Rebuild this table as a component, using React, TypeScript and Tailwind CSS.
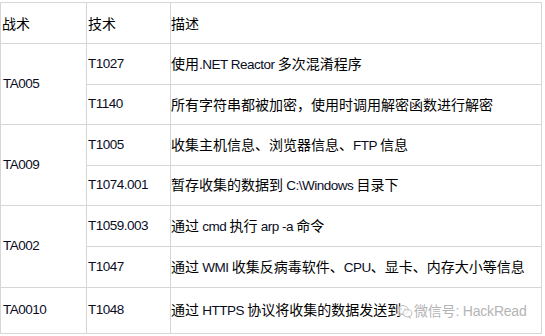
import { Fragment } from 'react';

// split mixed text so latin runs get the narrower, smaller face
function Mixed({ text }: { text: string }) {
  const parts = text.split(/([\x00-\x7F]+)/).filter(Boolean);
  return (
    <>
      {parts.map((p, i) =>
        /^[\x00-\x7F]+$/.test(p) ? (
          <span key={i} className="font-['Liberation_Sans',sans-serif] text-[13.5px] tracking-[-0.5px] text-[#0a0d1f] whitespace-pre">
            {p}
          </span>
        ) : (
          <Fragment key={i}>{p}</Fragment>
        )
      )}
    </>
  );
}

interface Row {
  tech: string;
  desc: string;
  tactic?: string;
  span?: number;
}

const rows: Row[] = [
  { tactic: 'TA005', span: 2, tech: 'T1027', desc: '使用.NET Reactor 多次混淆程序' },
  { tech: 'T1140', desc: '所有字符串都被加密，使用时调用解密函数进行解密' },
  { tactic: 'TA009', span: 2, tech: 'T1005', desc: '收集主机信息、浏览器信息、FTP 信息' },
  { tech: 'T1074.001', desc: '暂存收集的数据到 C:\\Windows 目录下' },
  { tactic: 'TA002', span: 2, tech: 'T1059.003', desc: '通过 cmd 执行 arp -a 命令' },
  { tech: 'T1047', desc: '通过 WMI 收集反病毒软件、CPU、显卡、内存大小等信息' },
  { tactic: 'TA0010', span: 1, tech: 'T1048', desc: '通过 HTTPS 协议将收集的数据发送到' },
];

const spanClass: Record<number, string> = {
  1: 'row-span-1',
  2: 'row-span-2',
};

function WeChatMark() {
  return (
    <div className="absolute left-[226px] top-[13px] flex items-center gap-[1px] text-[#b4b4b4]">
      <svg width="16" height="15" viewBox="0 0 16 15" fill="none" stroke="#bdbdbd" strokeWidth="1">
        <ellipse cx="6" cy="6" rx="5.2" ry="4.4" fill="white" fillOpacity="0.6" />
        <path d="M3 9.6 L2.4 11.6 L4.8 10.3" />
        <ellipse cx="10.4" cy="9.2" rx="4.4" ry="3.6" fill="white" fillOpacity="0.6" />
        <path d="M12.8 12.3 L13.4 14 L11.4 12.8" />
        <circle cx="4.3" cy="5" r="0.7" fill="#bdbdbd" stroke="none" />
        <circle cx="7.7" cy="5" r="0.7" fill="#bdbdbd" stroke="none" />
      </svg>
      <span
        className="font-['Liberation_Sans','Noto_Sans_CJK_SC',sans-serif] text-[14px] tracking-[-0.2px]"
        style={{ textShadow: '0 0 1px #fff, 0 0 1px #fff' }}
      >
        微信号: HackRead
      </span>
    </div>
  );
}

export default function App() {
  return (
    <div className="w-[545px] h-[336px] bg-white pt-[2px] font-['Noto_Sans_CJK_SC',sans-serif] text-[14px] text-black">
      <div className="grid w-[542px] grid-cols-[85px_83px_370px] grid-rows-[40px_40px_39px_40px_39px_40px_40px_45px] gap-px bg-[#d6d6d6] p-px">
        <div className="flex items-center bg-white pl-[1px]">战术</div>
        <div className="flex items-center bg-white pl-[1px]">技术</div>
        <div className="flex items-center bg-white">描述</div>

        {rows.map((r, i) => (
          <Fragment key={i}>
            {r.tactic && (
              <div className={`flex items-center bg-white pl-[2px] ${spanClass[r.span ?? 1]}`}>
                <Mixed text={r.tactic} />
              </div>
            )}
            <div className="flex items-center bg-white pl-[1px]">
              <Mixed text={r.tech} />
            </div>
            <div className="relative flex items-center bg-white">
              <span>
                <Mixed text={r.desc} />
              </span>
              {i === rows.length - 1 && <WeChatMark />}
            </div>
          </Fragment>
        ))}
      </div>
    </div>
  );
}
